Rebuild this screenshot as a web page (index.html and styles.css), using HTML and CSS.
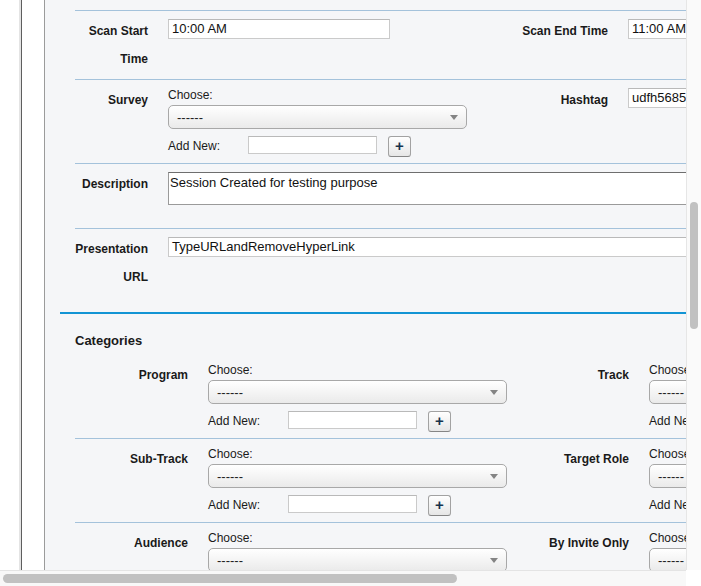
FILE: index.html
```html
<!DOCTYPE html>
<html>
<head>
<meta charset="utf-8">
<title>Session</title>
<link rel="stylesheet" href="styles.css">
</head>
<body>
<div class="viewport">
  <div class="page">
    <div class="gutter"></div>
    <div class="sidebar"></div>
    <div class="main">
      <div class="section info">
        <table class="detail info-table">
          <colgroup><col class="i1"><col class="i2"><col class="i3"><col class="i4"></colgroup>
          <tr class="row">
            <th class="label">Scan Start<br>Time</th>
            <td class="data"><div class="field time">10:00 AM</div></td>
            <th class="label">Scan End Time</th>
            <td class="data"><div class="field long">11:00 AM</div></td>
          </tr>
          <tr class="row">
            <th class="label">Survey</th>
            <td class="data">
              <div class="choose">Choose:</div>
              <div class="select"><span>------</span><svg class="arrow" width="8" height="5" viewBox="0 0 8 5"><path d="M0 0H8L4 5Z"/></svg></div>
              <div class="addnew"><span class="addlabel">Add New:</span><div class="field small"></div><div class="plus">+</div></div>
            </td>
            <th class="label">Hashtag</th>
            <td class="data"><div class="field long">udfh5685</div></td>
          </tr>
          <tr class="row">
            <th class="label">Description</th>
            <td class="data desc" colspan="3"><div class="textarea">Session Created for testing purpose</div></td>
          </tr>
          <tr class="row">
            <th class="label">Presentation<br>URL</th>
            <td class="data" colspan="3"><div class="field url">TypeURLandRemoveHyperLink</div></td>
          </tr>
        </table>
      </div>
      <div class="section categories">
        <h3 class="heading">Categories</h3>
        <table class="detail cat-table">
          <colgroup><col class="k1"><col class="k2"><col class="k3"><col class="k4"></colgroup>
          <tr class="row first">
            <th class="label">Program</th>
            <td class="data">
              <div class="choose">Choose:</div>
              <div class="select"><span>------</span><svg class="arrow" width="8" height="5" viewBox="0 0 8 5"><path d="M0 0H8L4 5Z"/></svg></div>
              <div class="addnew"><span class="addlabel">Add New:</span><div class="field small"></div><div class="plus">+</div></div>
            </td>
            <th class="label">Track</th>
            <td class="data">
              <div class="choose">Choose:</div>
              <div class="select"><span>------</span><svg class="arrow" width="8" height="5" viewBox="0 0 8 5"><path d="M0 0H8L4 5Z"/></svg></div>
              <div class="addnew"><span class="addlabel">Add New:</span><div class="field small"></div><div class="plus">+</div></div>
            </td>
          </tr>
          <tr class="row">
            <th class="label">Sub-Track</th>
            <td class="data">
              <div class="choose">Choose:</div>
              <div class="select"><span>------</span><svg class="arrow" width="8" height="5" viewBox="0 0 8 5"><path d="M0 0H8L4 5Z"/></svg></div>
              <div class="addnew"><span class="addlabel">Add New:</span><div class="field small"></div><div class="plus">+</div></div>
            </td>
            <th class="label">Target Role</th>
            <td class="data">
              <div class="choose">Choose:</div>
              <div class="select"><span>------</span><svg class="arrow" width="8" height="5" viewBox="0 0 8 5"><path d="M0 0H8L4 5Z"/></svg></div>
              <div class="addnew"><span class="addlabel">Add New:</span><div class="field small"></div><div class="plus">+</div></div>
            </td>
          </tr>
          <tr class="row">
            <th class="label">Audience</th>
            <td class="data">
              <div class="choose">Choose:</div>
              <div class="select"><span>------</span><svg class="arrow" width="8" height="5" viewBox="0 0 8 5"><path d="M0 0H8L4 5Z"/></svg></div>
            </td>
            <th class="label">By Invite Only</th>
            <td class="data">
              <div class="choose">Choose:</div>
              <div class="select"><span>------</span><svg class="arrow" width="8" height="5" viewBox="0 0 8 5"><path d="M0 0H8L4 5Z"/></svg></div>
            </td>
          </tr>
        </table>
      </div>
    </div>
  </div>
  <div class="vscroll"><div class="vthumb"></div></div>
  <div class="hscroll"><div class="hthumb"></div></div>
  <div class="corner"></div>
</div>
</body>
</html>
```

FILE: styles.css
```css
html, body {
  margin: 0;
  padding: 0;
  overflow: hidden;
  background: #fff;
}

body {
  font-family: "Liberation Sans", Arial, sans-serif;
  color: #1a1a1a;
}

.viewport {
  display: grid;
  grid-template-columns: 686px 15px;
  grid-template-rows: 570px 16px;
  width: 701px;
  height: 586px;
}

.page {
  display: flex;
  overflow: hidden;
  min-width: 0;
}

.gutter {
  width: 22px;
  flex: none;
  background: linear-gradient(to right, #fff 0, #fff 19px, #e4e4e4 19px, #e4e4e4 21px, #5e5e5e 21px, #5e5e5e 22px);
}

.sidebar {
  width: 22px;
  flex: none;
  background: #fff;
  border-right: 1px solid #9b9b9b;
}

.main {
  flex: 1;
  min-width: 0;
  background: #f5f6f8;
  padding-left: 15px;
}

.section.info {
  padding: 10px 0 15px 0;
}

.section.categories {
  border-top: 2px solid #1294d4;
}

.heading {
  margin: 0;
  padding: 18px 0 5px 15px;
  font-size: 13px;
  line-height: 17px;
  font-weight: bold;
  color: #1a1a1a;
}

.detail {
  margin-left: 15px;
  border-collapse: separate;
  border-spacing: 0;
  table-layout: fixed;
}

.info-table { width: 763px; }
.i1 { width: 83px; }
.i2 { width: 360px; }
.i3 { width: 100px; }
.i4 { width: 220px; }

.cat-table { width: 784px; }
.k1 { width: 123px; }
.k2 { width: 331px; }
.k3 { width: 110px; }
.k4 { width: 220px; }

.row > th,
.row > td {
  border-top: 1px solid #a4c2db;
}

.row.first > th,
.row.first > td {
  border-top-color: transparent;
}

.label {
  text-align: right;
  vertical-align: top;
  padding: 6px 10px 6px 0;
  font-size: 12px;
  line-height: 28px;
  font-weight: bold;
  white-space: nowrap;
  color: #1a1a1a;
}

.data {
  vertical-align: top;
  text-align: left;
  padding: 8px 0 6px 10px;
  white-space: nowrap;
}

.data.desc {
  padding-bottom: 23px;
}

.field {
  box-sizing: border-box;
  height: 20px;
  background: #fff;
  border: 1px solid #cacaca;
  border-top-color: #b9b9b9;
  padding: 0 3px;
  font-size: 13px;
  line-height: 18px;
  color: #111;
  overflow: hidden;
}

.field.time { width: 222px; }
.field.long { width: 200px; }
.field.url { width: 600px; }

.field.small {
  width: 129px;
  height: 18px;
}

.textarea {
  box-sizing: border-box;
  width: 600px;
  height: 33px;
  background: #fff;
  border: 1px solid #9a9a9a;
  border-top-color: #6e6e6e;
  padding: 1px 1px;
  font-size: 13px;
  line-height: 17px;
  color: #111;
}

.choose {
  font-size: 12px;
  line-height: 15px;
  color: #1a1a1a;
}

.select {
  box-sizing: border-box;
  width: 299px;
  height: 24px;
  margin-top: 2px;
  border: 1px solid #a8a8a8;
  border-radius: 5px;
  background: linear-gradient(#ffffff, #eaeaea);
  padding: 0 8px;
  display: flex;
  align-items: center;
  justify-content: space-between;
  font-size: 13px;
  color: #222;
}

.arrow {
  fill: #848484;
  flex: none;
}

.addnew {
  margin-top: 7px;
  height: 21px;
  display: flex;
  align-items: flex-start;
}

.addlabel {
  width: 80px;
  flex: none;
  padding-top: 3px;
  font-size: 12px;
  line-height: 15px;
  color: #1a1a1a;
}

.plus {
  box-sizing: border-box;
  width: 23px;
  height: 21px;
  margin-left: 11px;
  border: 1px solid #a2a2a2;
  border-bottom-color: #858585;
  border-radius: 3px;
  background: linear-gradient(#ffffff, #e6e6e6);
  text-align: center;
  font-size: 15px;
  line-height: 18px;
  font-weight: bold;
  color: #17324c;
}

.vscroll {
  grid-column: 2;
  grid-row: 1;
  background: #fafafa;
  border-left: 1px solid #e6e6e6;
  box-sizing: border-box;
}

.vthumb {
  width: 8px;
  height: 127px;
  margin: 202px 0 0 3px;
  border-radius: 4px;
  background: #c1c1c1;
}

.hscroll {
  grid-column: 1;
  grid-row: 2;
  background: #f8f8f8;
  border-top: 1px solid #e4e4e4;
  box-sizing: border-box;
  padding-top: 3px;
}

.hthumb {
  width: 454px;
  height: 9px;
  margin-left: 3px;
  border-radius: 5px;
  background: #c1c1c1;
}

.corner {
  grid-column: 2;
  grid-row: 2;
  background: #fff;
}
```
